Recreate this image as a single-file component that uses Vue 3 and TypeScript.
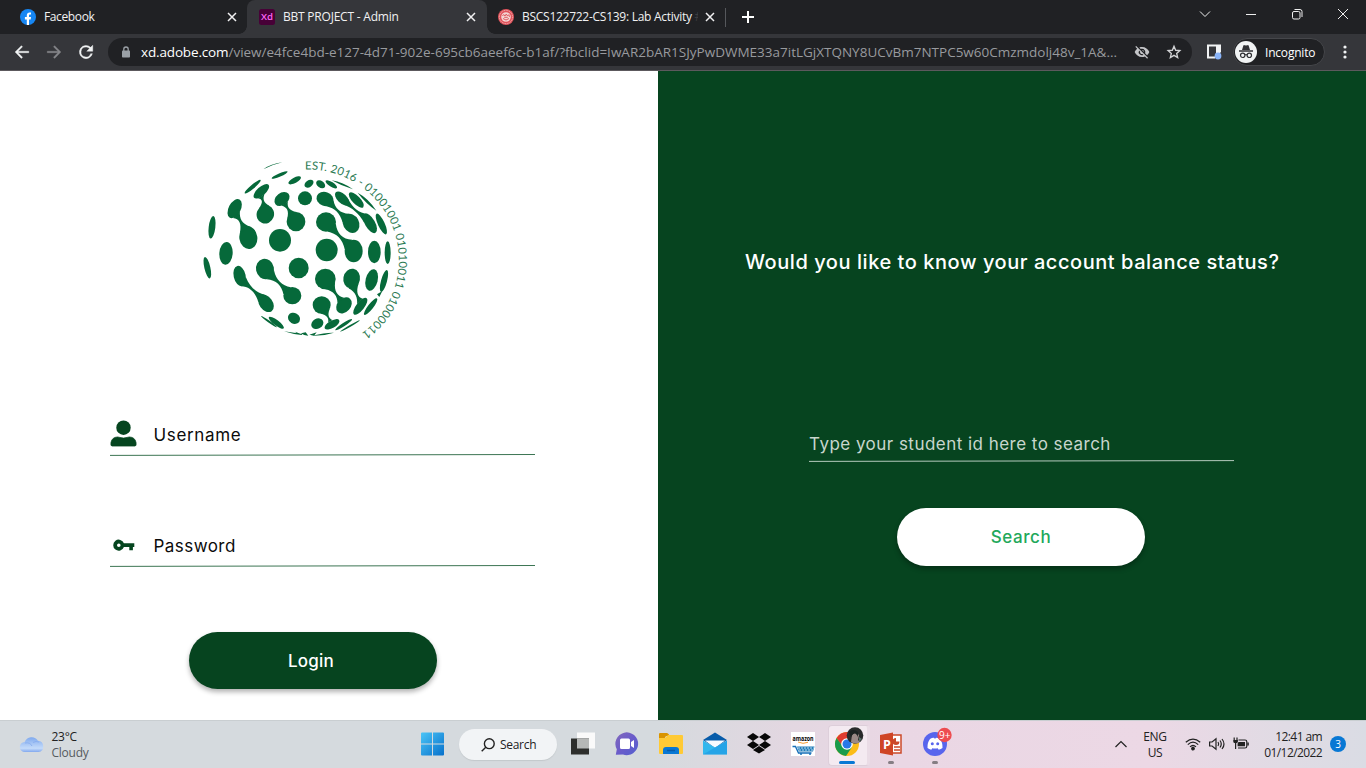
<script setup lang="ts">
interface Blob { x: number; y: number; rx: number; ry: number; a: number }
type Quint = [number, number, number, number, number]

const blob = ([x, y, rx, ry, a]: Quint): Blob => ({ x, y, rx, ry, a })

// Free-standing dots of the globe: centre, radii, rotation
const dots: Blob[] = ([
  [254, 75, 26, 5, -23], [299, 91, 21, 8, -28], [173, 110, 31, 6, -40],
  [51, 232, 10, 34, 7], [255, 271, 33, 34, 0], [93, 310, 20, 34, 4],
  [330, 145, 21, 21, 0], [342, 101, 15, 10, -35], [377, 103, 15, 10, 35],
  [409, 103, 20, 7, 32], [484, 150, 30, 12, 46],
  [559, 222, 10, 34, -25], [395, 300, 33, 34, 0], [538, 306, 19, 34, 0],
  [578, 308, 9, 34, 0], [311, 354, 30, 31, 0], [530, 390, 18, 33, 14],
  [567, 393, 9, 34, 15], [527, 470, 31, 8, -52], [367, 521, 19, 15, -28],
  [37, 353, 9, 33, -13], [297, 505, 19, 16, 30], [244, 518, 28, 8, 37],
  [222, 515, 29, 3, 35], [446, 524, 30, 5, -33], [465, 528, 34, 3, -30],
] as Quint[]).map(blob)

// Joined pairs of dots
const pairs: [Blob, Blob][] = ([
  [[199, 124, 29, 13, -42], [211, 193, 26, 28, 20]],
  [[261, 147, 25, 18, -38], [303, 215, 28, 29, 0]],
  [[119, 176, 18, 31, 28], [160, 263, 27, 34, -8]],
  [[390, 147, 26, 21, 20], [468, 220, 24, 30, -28]],
  [[441, 145, 26, 14, 44], [525, 220, 15, 33, -30]],
  [[393, 216, 30, 29, 0], [476, 303, 27, 34, 0]],
  [[391, 387, 31, 31, 0], [447, 466, 20, 27, 42]],
  [[470, 386, 25, 30, 10], [496, 469, 12, 31, 38]],
  [[380, 465, 27, 26, 0], [411, 523, 25, 11, -30]],
  [[134, 378, 18, 31, -13], [213, 460, 20, 29, -36]],
  [[210, 357, 27, 31, -12], [292, 437, 27, 26, 0]],
] as [Quint, Quint][]).map(([p, q]) => [blob(p), blob(q)])

function reach(e: Blob, t: number): [number, number] {
  const d = t - (e.a * Math.PI) / 180
  const r = (e.rx * e.ry) / Math.hypot(e.ry * Math.cos(d), e.rx * Math.sin(d))
  return [e.x + r * Math.cos(t), e.y + r * Math.sin(t)]
}
// Thin waist: both flanks pull in to the axis between the two dots
function neck(p: Blob, q: Blob): string {
  const t = Math.atan2(q.y - p.y, q.x - p.x)
  const f = (n: [number, number]) => n.map((v) => v.toFixed(1)).join(' ')
  const a = reach(p, t)
  const b = reach(q, t + Math.PI)
  const on = (k: number): [number, number] => [a[0] + (b[0] - a[0]) * k, a[1] + (b[1] - a[1]) * k]
  const w = 0.62
  return `M${f(reach(p, t + w))}C${f(on(0.3))} ${f(on(0.7))} ${f(reach(q, t + Math.PI - w))}L${f(reach(q, t + Math.PI + w))}C${f(on(0.7))} ${f(on(0.3))} ${f(reach(p, t - w))}Z`
}
const joined = pairs.flat()
const necks = pairs.map(([p, q]) => neck(p, q))
</script>

<template>
  <div class="screen">
    <header class="tabs">
      <div class="tab first">
        <svg class="fav" viewBox="0 0 16 16"><circle cx="8" cy="8" r="8" fill="#1686f3" /><path d="M6.8 16v-5.6H4.9V8h1.9V6.4c0-2 1.1-3 2.8-3 .8 0 1.4.1 1.4.1v1.9h-.9c-.9 0-1.1.6-1.1 1.1V8h2l-.3 2.4H9V16z" fill="#fff" /></svg>
        <span class="title t1">Facebook</span>
        <svg class="x" viewBox="0 0 10 10"><path d="M1 1l8 8M9 1L1 9" /></svg>
      </div>
      <div class="tab active">
        <svg class="fav" viewBox="0 0 16 16"><rect width="16" height="16" rx="2.5" fill="#470137" /><text x="2" y="11.4" font-size="9.5" font-weight="600" fill="#ff61f6" textLength="12" lengthAdjust="spacingAndGlyphs">Xd</text></svg>
        <span class="title t2">BBT PROJECT - Admin</span>
        <svg class="x" viewBox="0 0 10 10"><path d="M1 1l8 8M9 1L1 9" /></svg>
      </div>
      <div class="tab third">
        <svg class="fav" viewBox="0 0 16 16"><circle cx="8" cy="8" r="8" fill="#e0525a" /><circle cx="8" cy="8" r="6.6" fill="none" stroke="#f6bcbc" stroke-dasharray="1 .7" /><circle cx="8" cy="8" r="4.8" fill="#f4d5d3" /><path d="M4.5 7l1.2-1.5L7 7l1.3-2L9.5 7l1.4-1.4.6 2.3M5 9.5q3 3 6 0M6.2 8.3h3.6" fill="none" stroke="#dc5c61" /></svg>
        <span class="title t3">BSCS122722-CS139: Lab Activity <i>#</i></span>
        <svg class="x" viewBox="0 0 10 10"><path d="M1 1l8 8M9 1L1 9" /></svg>
      </div>
      <svg class="plus" viewBox="0 0 12 12"><path d="M6 0v12M0 6h12" stroke="#fff" stroke-width="2" /></svg>
      <div class="win">
        <svg viewBox="0 0 12 12"><path d="M1 3.5l5 5 5-5" /></svg>
        <svg viewBox="0 0 12 12"><path d="M1 6.5h10" /></svg>
        <svg viewBox="0 0 12 12"><rect x="1.5" y="3.5" width="7.5" height="7.5" rx="1.5" /><path d="M3.5 1.5H9q2 0 2 2V9" /></svg>
        <svg viewBox="0 0 12 12"><path d="M1 1l10 10M11 1L1 11" /></svg>
      </div>
    </header>

    <div class="toolbar">
      <svg class="nav" viewBox="0 0 24 24"><path d="M21 11H6.800l5.900-5.900L11.200 3.500 2.800 12l8.400 8.500 1.500-1.600L6.800 13H21z" fill="#f1f3f4" stroke="#f1f3f4" stroke-width=".5" /></svg>
      <svg class="nav" viewBox="0 0 24 24"><path d="M3 11h14.200l-5.900-5.900 1.500-1.600 8.400 8.500-8.400 8.500-1.500-1.600 5.900-5.900H3z" fill="#85868a" stroke="#85868a" stroke-width=".5" /></svg>
      <svg class="nav" viewBox="0 0 24 24"><path d="M18.200 5.800A8.800 8.800 0 1 0 20.500 14.200h-2.300A6.600 6.600 0 1 1 12 5.400c1.830 0 3.450.76 4.640 1.960L13 11h8V3z" fill="#f1f3f4" stroke="#f1f3f4" stroke-width=".5" /></svg>
      <div class="omni">
        <svg class="lock" viewBox="0 0 10 12"><path d="M2.8 5V3.2a2.2 2.2 0 0 1 4.4 0V5" fill="none" stroke="#9aa0a6" stroke-width="1.3" /><rect x="1" y="4.6" width="8" height="7" rx=".8" fill="#9aa0a6" /></svg>
        <span class="url"><b>xd.adobe.com</b>/view/e4fce4bd-e127-4d71-902e-695cb6aeef6c-b1af/?fbclid=IwAR2bAR1SJyPwDWME33a7itLGjXTQNY8UCvBm7NTPC5w60Cmzmdolj48v_1A&amp;...</span>
        <svg class="eye" viewBox="0 0 24 24"><path d="M12 7a5 5 0 0 1 4.64 6.83l2.92 2.92A11.8 11.8 0 0 0 23 12C21.270 7.610 17 4.500 12 4.500c-1.400 0-2.740.250-3.980.700l2.160 2.160C10.740 7.130 11.350 7 12 7zM2 4.270l2.740 2.740A11.800 11.800 0 0 0 1 12c1.730 4.390 6 7.500 11 7.500 1.550 0 3.030-.3 4.380-.84L19.730 22 21 20.730 3.270 3zM7.530 9.800l1.550 1.550A3 3 0 0 0 12.650 14.920l1.550 1.550A5 5 0 0 1 7.530 9.800zM11.840 9.020l3.150 3.150a3 3 0 0 0-3.150-3.150z" fill="#c4c5c8" /></svg>
        <svg class="star" viewBox="0 0 24 24"><path d="M12 3.500l2.500 5.900 6.300.5-4.800 4.200 1.500 6.200-5.500-3.300-5.500 3.300L8 14.100 3.200 9.900l6.300-.5z" fill="none" stroke="#d2d3d5" stroke-width="2" /></svg>
      </div>
      <svg class="side" viewBox="0 0 16 16"><path d="M9 13.500H2v-12h12V8" fill="none" stroke="#f1f3f4" stroke-width="2" /><path d="M10 1h4.500v8H10z" fill="#f1f3f4" /><circle cx="12" cy="12" r="3.400" fill="#8ab4f8" /></svg>
      <div class="incog">
        <svg viewBox="0 0 22 22"><circle cx="11" cy="11" r="11" fill="#f1f3f4" /><path d="M7 9l1.300-4.300q.3-.8 1.200-.5l1.500.4 1.500-.4q.9-.3 1.200.5L15 9zM4 9.300h14v1.400H4z" fill="#303135" /><g fill="none" stroke="#303135" stroke-width="1.200"><circle cx="7.700" cy="14.300" r="2.200" /><circle cx="14.300" cy="14.300" r="2.200" /><path d="M10 14q1-.7 2 0" /></g></svg>
        <span>Incognito</span>
      </div>
      <svg class="dots" viewBox="0 0 4 16"><circle cx="2" cy="3" r="1.600" /><circle cx="2" cy="8" r="1.600" /><circle cx="2" cy="13" r="1.600" /></svg>
    </div>

    <main class="page">
      <section class="login">
        <svg class="globe" viewBox="0 0 660 600">
          <defs><path id="ring" d="M330 58.500A272 272 0 0 1 500 550" /></defs>
          <g fill="#06693a">
            <ellipse v-for="(d, i) in dots" :key="'d' + i" :cx="d.x" :cy="d.y" :rx="d.rx" :ry="d.ry" :transform="`rotate(${d.a} ${d.x} ${d.y})`" />
            <ellipse v-for="(d, i) in joined" :key="'j' + i" :cx="d.x" :cy="d.y" :rx="d.rx" :ry="d.ry" :transform="`rotate(${d.a} ${d.x} ${d.y})`" />
            <path v-for="(n, i) in necks" :key="'n' + i" :d="n" />
            <path d="M205 58Q228 41 262 37Q231 44 205 58zM410 91Q445 97 474 118Q440 108 410 91zM488 128Q520 145 544 182Q512 160 488 128zM267 544l55 8-2 3q-30-3-53-11zM300 545l20 8-15-3zM318 550l14-3 8 10q-14 0-22-7zM343 554l22-7-8 10zM352 557q40-10 65-9-30 10-65 9zM546 433l16-10-9 18z" />
          </g>
          <text class="ringtext" font-size="34"><textPath href="#ring" textLength="692">EST. 2016 - 01001001 01010011 01000011</textPath></text>
        </svg>
        <div class="field user">
          <svg class="ficon" viewBox="0 0 27 27"><circle cx="13.500" cy="7.700" r="7.200" fill="#05451f" /><path d="M1.800 26Q.6 26 1 22.500 2 17.200 7.600 17 13.500 19.200 19.400 17 25 17.200 26 22.500 26.400 26 25.200 26z" fill="#05451f" stroke="#05451f" stroke-width=".8" /></svg>
          <span class="u">Username</span>
          <svg class="rule" viewBox="0 0 425 2" preserveAspectRatio="none"><path d="M0 1.400L425 .5" stroke="#3c7553" /></svg>
        </div>
        <div class="field pass">
          <svg class="ficon" viewBox="0 0 27 27"><path fill-rule="evenodd" d="M13.900 12.300h10.400v3.700h-1.400v3.300h-3.600v-3.300h-5.400a5.500 5.500 0 1 1 0-3.700zM8.800 12.400a1.800 1.800 0 1 0 0 3.600 1.800 1.800 0 0 0 0-3.600z" fill="#05451f" /></svg>
          <span class="p">Password</span>
          <svg class="rule" viewBox="0 0 425 2" preserveAspectRatio="none"><path d="M0 1.400L425 .5" stroke="#3c7553" /></svg>
        </div>
        <button class="btn dark"><span>Login</span></button>
      </section>
      <section class="balance">
        <h1>Would you like to know your account balance status?</h1>
        <div class="query">
          <span>Type your student id here to search</span>
          <svg class="rule" viewBox="0 0 425 2" preserveAspectRatio="none"><path d="M0 1.400L425 .6" stroke="#b5cabd" /></svg>
        </div>
        <button class="btn light"><span>Search</span></button>
      </section>
    </main>

    <footer class="taskbar">
      <div class="weather">
        <svg viewBox="0 0 24 18"><defs><linearGradient id="cl" x1="0" y1="0" x2="0" y2="1"><stop offset="0" stop-color="#7fa9ee" /><stop offset=".75" stop-color="#c4dbfa" /><stop offset="1" stop-color="#82a8ee" /></linearGradient></defs><path d="M5 17a5 5 0 0 1-.4-10A7.500 7.500 0 0 1 18 5.700 5.700 5.700 0 0 1 18.500 17z" fill="url(#cl)" /><path d="M5 8q5-1 7 3M13 7.500q3-2 6-.5" fill="none" stroke="#8bb0f0" /></svg>
        <div class="wt"><span>23°C</span><em>Cloudy</em></div>
      </div>
      <div class="cell start"><svg viewBox="0 0 24 24"><defs><linearGradient id="w" x1="0" y1="0" x2="1" y2="1"><stop offset="0" stop-color="#4bc5f7" /><stop offset="1" stop-color="#0670cb" /></linearGradient></defs><path d="M1 1.500q0-1 1-1H12V11.500H1zM13 .5h10q1 0 1 1v10h-11zM1 12.500h11v11h-10q-1 0-1-1zM13 12.500h11v10q0 1-1 1h-10z" fill="url(#w)" /></svg></div>
      <div class="search"><svg viewBox="0 0 14 14"><circle cx="8.300" cy="5.700" r="4.900" /><path d="M4.800 9.200L.7 13.300" /></svg><span>Search</span></div>
      <div class="cell"><svg viewBox="0 0 24 24"><rect x="6" y=".5" width="18" height="16" fill="#fafafa" /><rect y="6.500" width="18" height="16" fill="#2d2e2c" /><rect x="6" y="6.500" width="12" height="10" fill="#b6b8b7" /></svg></div>
      <div class="cell"><svg viewBox="0 0 24 24"><defs><linearGradient id="ch" x1="0" y1="0" x2="1" y2="1"><stop offset="0" stop-color="#8269bb" /><stop offset=".5" stop-color="#6b5cca" /><stop offset="1" stop-color="#5360cf" /></linearGradient></defs><path d="M.8 22.800l1-5.500A11.400 11.400 0 1 1 8 22.500z" fill="url(#ch)" /><path d="M6.500 6.500h7Q15 6.500 15 8v7.500q0 1.500-1.500 1.500h-7Q5 17 5 15.500V8Q5 6.500 6.500 6.500zM16 10l3-2v8l-3-2z" fill="#fff" /></svg></div>
      <div class="cell"><svg viewBox="0 0 24 24"><path d="M0 2q0-1 1-1h7q1 0 3 3h-4l-2 3H0z" fill="#d99400" /><path d="M0 6h6l3-3h14q1 0 1 1v17q0 1-1 1H1q-1 0-1-1z" fill="#ffca35" /><path d="M4 22v-4q0-3 3-3h10q3 0 3 3v4z" fill="#0878d4" /><path d="M8 18.500h8" stroke="#075ba8" stroke-width="1.500" /></svg></div>
      <div class="cell"><svg viewBox="0 0 24 24"><path d="M0 8L12 .5 24 8l-12 8z" fill="#075ba9" /><path d="M2 8.500h20L12 16z" fill="#f7fbff" /><path d="M0 8.500l12 7 12-7v14H0z" fill="#32b7ed" /><path d="M0 22.500l24-14v14z" fill="#168de0" opacity=".45" /></svg></div>
      <div class="cell"><svg viewBox="0 0 24 24"><path d="M6 1l6 4-6 4-6-4zM18 1l6 4-6 4-6-4zM6 9l6 4-6 4-6-4zM18 9l6 4-6 4-6-4zM6 18l6-4 6 4-6 3.500z" fill="#080808" /></svg></div>
      <div class="cell"><svg viewBox="0 0 24 24"><rect width="24" height="24" fill="#fff" /><text x="1.500" y="8.800" font-size="7" font-weight="700" textLength="21" lengthAdjust="spacingAndGlyphs">amazon</text><path d="M7 10q5 2.500 10 .3" stroke="#f49b32" fill="none" /><path d="M1.500 14.500h3l3 6.500h13" stroke="#166fb8" stroke-width="1.400" fill="none" /><path d="M6 14.500h17.500l-1.500 5H8z" fill="#227db9" /><path d="M7 16h16M8 18h14" stroke="#b8d9ed" stroke-dasharray="2 1" /><circle cx="10" cy="22" r="1" fill="#166fb8" /><circle cx="19" cy="22" r="1" fill="#166fb8" /></svg></div>
      <div class="cell current"><svg class="wide" viewBox="0 0 30 30"><circle cx="13" cy="17" r="12" fill="#fbbc17" /><path d="M2.600 11A12 12 0 0 1 23.400 11H13L8 19z" fill="#df3b30" /><path d="M2.600 11A12 12 0 0 0 12 29l6-9-5 2-4-2z" fill="#199b4c" /><circle cx="13" cy="17" r="5.800" fill="#fff" /><circle cx="13" cy="17" r="4.500" fill="#2878e9" /><circle cx="21" cy="8.500" r="8.300" fill="#292b2b" /><path d="M17 15l1-7 4-3 3 3-1 5 2 2q-4 3-9 0z" fill="#9a8986" /><path d="M15 5q4-4 9 0v5q-2-5-5-3l-2 3z" fill="#1b2322" /><path d="M25 10l3 2-3 3z" fill="#58706a" /></svg></div>
      <div class="cell run"><svg viewBox="0 0 24 24"><path d="M11 3h11v18H11z" fill="#fff" stroke="#cb4928" stroke-width="1.500" /><path d="M1 3l13-2.500v23L1 21z" fill="#cf4525" /><path d="M17 6a3.500 3.500 0 1 0 3.500 3.500H17z" fill="#cb4928" /><path d="M15 15h6M15 18h6" stroke="#cb4928" stroke-width="1.300" /><text x="4" y="16.500" font-size="12.500" font-weight="700" fill="#fff">P</text></svg></div>
      <div class="cell run"><svg class="wide" viewBox="0 0 30 30"><circle cx="13" cy="17" r="12" fill="#5865ed" /><path d="M5.500 21Q5.200 15.500 8 12q2-1.400 4-1.300l.4.900h1.200l.4-.9q2 0 4 1.300 2.800 3.500 2.500 9-1.500 1.400-3.800 1.700l-1-1.500q-2.700.6-5.400 0l-1 1.500Q7 22.400 5.500 21z" fill="#fff" /><circle cx="10.300" cy="16.700" r="1.500" fill="#5865ed" /><circle cx="15.700" cy="16.700" r="1.500" fill="#5865ed" /><circle cx="22.500" cy="8" r="7.200" fill="#ed4c50" /><text x="17" y="12" font-size="11" fill="#fff" textLength="11.500" lengthAdjust="spacingAndGlyphs">9+</text></svg></div>
      <div class="tray">
        <svg class="chev" viewBox="0 0 14 10"><path d="M1.500 7L7 1.500 12.500 7" /></svg>
        <div class="lang"><span>ENG</span><span>US</span></div>
        <svg class="ti" viewBox="0 0 16 16"><path d="M.8 5.300q7.200-6.400 14.400 0M2.800 7.600q5.200-4.800 10.400 0M5 9.900q3-2.800 6 0" /><circle cx="8" cy="11.600" r="1.300" fill="#222" /></svg>
        <svg class="ti vol" viewBox="0 0 16 16"><path d="M.6 5v4h2.500L7 12.200V1.800L3.100 5zM9 5q1.400 2 0 4M11 3.500q2.500 3.500 0 7M13 2q4 5 0 10" /></svg>
        <svg class="ti bat" viewBox="0 0 16 16"><path d="M5.500 3H12q1.800 0 1.800 1.800v4.400q0 1.800-1.800 1.800H5M15.200 5.500v3M1.200 .5v3M4 .5v3M2.600 6v6" /><path d="M.3 3h4.600v2.300q-2.300 2-4.600 0zM5.500 5H12v4.200H4.600V6.500z" fill="#222" stroke="none" /></svg>
        <div class="clock"><span class="c1">12:41 am</span><span class="c2">01/12/2022</span></div>
        <div class="badge">3</div>
      </div>
    </footer>
  </div>
</template>

<style>
html, body { margin: 0; overflow: hidden; }
</style>

<style scoped>
* { box-sizing: border-box; }
.screen { width: 1366px; height: 768px; display: flex; flex-direction: column; overflow: hidden; font-family: "Open Sans", "Noto Sans", sans-serif; }
svg { display: block; flex: none; overflow: visible; }
span, em { white-space: nowrap; }

.tabs { height: 34px; background: #202124; display: flex; align-items: center; color: #f1f1f2; font-size: 12px; }
.tab { height: 34px; display: flex; align-items: center; position: relative; }
.first { width: 247px; padding: 0 10px 0 20px; }
.active { width: 240px; padding: 0 11px 0 12px; background: #35363a; border-radius: 8px 8px 0 0; }
.active::before, .active::after { content: ""; position: absolute; bottom: 0; width: 8px; height: 8px; }
.active::before { left: -8px; background: radial-gradient(circle at 0 0, #202124 7.500px, #35363a 8px); }
.active::after { right: -8px; background: radial-gradient(circle at 100% 0, #202124 7.500px, #35363a 8px); }
.third { width: 239px; padding: 0 11px; }
.third::after { content: ""; position: absolute; right: 0; top: 8px; width: 1px; height: 19px; background: #56585c; }
.fav { width: 16px; height: 16px; margin-right: 8px; }
.title { flex: 1; min-width: 0; overflow: hidden; line-height: 18px; }
.t1 { letter-spacing: -.38px; }
.t2 { letter-spacing: -.22px; }
.t3 { letter-spacing: -.27px; flex: none; width: 176px; margin-right: 7px; }
.title i { font-style: normal; color: #3c3d40; }
.x { width: 10px; height: 10px; }
.x path { stroke: #f1f1f2; stroke-width: 1.500; }
.plus { width: 12px; height: 12px; margin-left: 16px; }
.win { margin-left: auto; margin-right: 17px; margin-top: -6px; display: flex; gap: 34px; }
.win svg { width: 12px; height: 12px; fill: none; stroke: #eee; stroke-width: 1; }

.toolbar { height: 37px; background: #35363a; border-bottom: 1px solid #5c595d; display: flex; align-items: center; padding-left: 13px; }
.nav { width: 18px; height: 18px; margin-right: 14px; }
.omni { margin-left: -1px; width: 1084px; height: 28px; border-radius: 14px; background: #202124; display: flex; align-items: center; }
.lock { width: 10px; height: 12px; margin: 0 10px 0 13px; }
.url { flex: none; width: 978px; font-size: 13.500px; line-height: 20px; color: #989a9e; margin-right: 15px; }
.url b { font-weight: 400; color: #fff; letter-spacing: -.15px; }
.eye { width: 16px; height: 16px; margin-right: 16px; }
.star { width: 16px; height: 16px; }
.side { width: 16px; height: 16px; margin-left: 14px; }
.incog { margin-left: 11px; width: 92px; height: 28px; border: 1px solid #45464a; border-radius: 14px; background: #202124; display: flex; align-items: center; color: #fff; font-size: 12px; letter-spacing: -.2px; padding-left: 1px; }
.incog svg { width: 22px; height: 22px; margin-right: 8px; }
.dots { width: 4px; height: 16px; margin-left: 18px; fill: #f1f3f4; }

.page { height: 649px; display: flex; font-family: Inter, "Noto Sans", sans-serif; }
.login { width: 658px; background: #fff; padding-top: 79px; }
.globe { width: 220px; height: 200px; margin-left: 195px; }
.ringtext { font-family: Lato, sans-serif; font-weight: 400; fill: #2b7a53; }
.field { width: 425px; height: 40px; margin: 66px 0 0 110px; display: grid; grid-template-columns: 27px 1fr; grid-template-rows: 38px 2px; column-gap: 16.500px; align-items: center; font-size: 17px; color: #0b0b0b; }
.u { letter-spacing: .65px; }
.p { letter-spacing: .45px; }
.pass { margin-top: 71px; }
.ficon { width: 27px; height: 27px; margin-top: -3px; }
.field span { margin-top: -1px; }
.rule { grid-column: 1 / -1; width: 425px; height: 2px; }
.btn { width: 248px; height: 57px; border: 0; border-radius: 29px; display: flex; align-items: center; justify-content: center; font: 500 17px Inter, sans-serif; padding: 0; }
.dark { margin: 65px 0 0 188.500px; background: #06441f; color: #fff; box-shadow: 0 3px 5px rgba(0, 0, 0, .3); letter-spacing: .2px; }
.dark span { margin-right: 3px; }
.balance { width: 708px; background: #06441f; color: #fff; display: flex; flex-direction: column; }
h1 { margin: 177px 0 0 87px; font-size: 20px; line-height: 28px; font-weight: 500; letter-spacing: .55px; white-space: nowrap; }
.query { margin: 153px 0 0 151px; width: 425px; height: 33px; color: #c8d6cd; font-size: 17px; line-height: 31px; letter-spacing: .47px; }
.query span { display: block; }
.light { margin: 46px 0 0 239px; height: 58px; background: #fff; color: #22a85a; box-shadow: 0 3px 5px rgba(0, 0, 0, .3); letter-spacing: .55px; }

.taskbar { height: 48px; border-top: 1px solid #c9ced1; background: linear-gradient(90deg, #d5dade 0, #d5dade 48%, #e3d7e1 58%, #ead7e4 66%, #ecd8e5 84%, #e0dbe4 94%, #dadce4 100%); display: flex; align-items: center; font-size: 12px; color: #222; }
.weather { width: 410px; display: flex; align-items: center; padding-left: 20px; }
.weather svg { width: 24px; height: 18px; margin-top: -1px; }
.wt { margin-left: 7.500px; display: flex; flex-direction: column; line-height: 16px; letter-spacing: -.25px; }
.wt em { font-style: normal; color: #555b5f; }
.cell { width: 44px; height: 44px; display: flex; align-items: center; justify-content: center; position: relative; }
.cell svg { width: 24px; height: 24px; margin-top: -1px; }
.cell .wide { width: 30px; height: 30px; margin: -6px 0 0 4px; }
.start { margin-right: 5px; }
.search { width: 98px; height: 31px; border-radius: 16px; background: #f2f4f6; box-shadow: 0 1px 1px #c3c8cb; display: flex; align-items: center; padding-left: 22px; margin-right: 4px; letter-spacing: -.3px; }
.search svg { width: 14px; height: 14px; margin-right: 5px; fill: none; stroke: #222; stroke-width: 1.400; }
.current::before { content: ""; position: absolute; left: 3px; top: 2px; width: 38px; height: 39px; border-radius: 4px; background: #f4eaf1; border: 1px solid #ddcfda; border-right: 3px solid #eadce6; }
.current svg { position: relative; }
.current::after, .run::after { content: ""; position: absolute; bottom: 3px; left: 19px; width: 6px; height: 3px; border-radius: 2px; background: #857d83; }
.current::after { left: 14px; width: 16px; background: #0878d4; }
.tray { margin-left: auto; display: flex; align-items: center; padding-right: 20px; }
.tray svg { fill: none; stroke: #222; stroke-width: 1.200; }
.chev { width: 14px; height: 10px; }
.lang { width: 30px; margin: 0 15px 0 12px; display: flex; flex-direction: column; align-items: center; line-height: 16px; letter-spacing: -.3px; }
.ti { width: 16px; height: 16px; }
.vol { margin-left: 8px; }
.bat { margin-left: 8px; }
.clock { width: 73px; display: flex; flex-direction: column; align-items: flex-end; line-height: 16px; margin-right: 8px; }
.c1 { letter-spacing: -.6px; }
.c2 { letter-spacing: -.6px; }
.badge { width: 16px; height: 16px; border-radius: 50%; background: #0878d4; color: #fff; font-size: 10px; line-height: 16px; text-align: center; margin-top: -1px; }
</style>
